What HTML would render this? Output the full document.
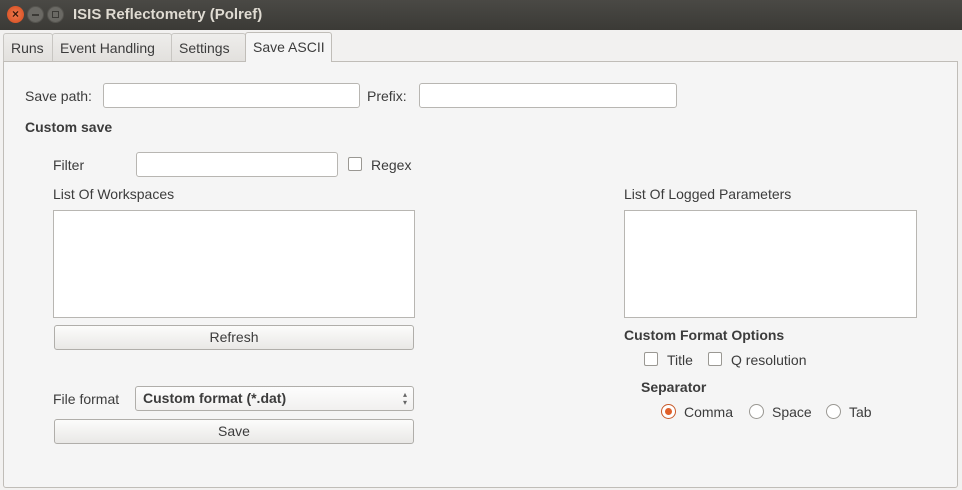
<!DOCTYPE html>
<html><head><meta charset="utf-8"><style>
*{box-sizing:border-box;margin:0;padding:0}
body{width:962px;height:490px;background:#f2f1f0;font-family:"Liberation Sans",sans-serif;font-size:14px;color:#3c3c3c;position:relative;overflow:hidden}
.a{position:absolute;white-space:nowrap}
.title{left:0;top:0;width:962px;height:30px;background:linear-gradient(#4a4945,#3b3a36);}
.title span{position:absolute;left:73px;top:6px;color:#dfdbd2;font-weight:bold;font-size:15px}
.wb{width:17px;height:17px;border-radius:50%;top:6px}
.tab{top:33px;height:29px;border:1px solid #c8c6c2;border-bottom:none;background:linear-gradient(#eeedeb,#e2e0dd);padding:6px 7px 0;font-size:14px;border-radius:3px 3px 0 0}
.panel{left:3px;top:61px;width:955px;height:427px;border:1px solid #c0bdb8;background:#f5f5f5;border-radius:0 0 3px 3px}
.inp{background:#fff;border:1px solid #b8b6b2;border-radius:3px;height:25px}
.btn{border:1px solid #b0aeaa;border-radius:3px;background:linear-gradient(#fcfcfb,#e9e8e6);height:25px;text-align:center;line-height:23px}
.cb{width:14px;height:14px;border:1px solid #9a9893;border-radius:2px;background:#fff}
.rb{width:15px;height:15px;border:1px solid #9a9893;border-radius:50%;background:#fff}
b{font-weight:bold}
</style></head><body>
<div class="a title"><span>ISIS Reflectometry (Polref)</span></div>
<div class="a wb" style="left:7px;background:radial-gradient(#f07a4e,#d3491c)"><div style="color:#3a1a0c;font-size:12px;text-align:center;line-height:17px;font-weight:bold">×</div></div>
<div class="a wb" style="left:27px;background:#6a6964;border:1px solid #55544f"><div style="margin:7px 4px;height:2px;background:#3b3a36"></div></div>
<div class="a wb" style="left:47px;background:#6a6964;border:1px solid #55544f"><div style="margin:4px;height:7px;border:1px solid #3b3a36"></div></div>
<div class="a tab" style="left:3px;width:50px">Runs</div>
<div class="a tab" style="left:52px;width:120px">Event Handling</div>
<div class="a tab" style="left:171px;width:75px">Settings</div>
<div class="a panel"></div>
<div class="a tab" style="left:245px;width:87px;top:32px;height:30px;background:#f5f5f5;border-color:#c0bdb8;padding-top:6px">Save ASCII</div>

<div class="a" style="left:25px;top:88px">Save path:</div>
<div class="a inp" style="left:103px;top:83px;width:257px"></div>
<div class="a" style="left:367px;top:88px">Prefix:</div>
<div class="a inp" style="left:419px;top:83px;width:258px"></div>
<div class="a" style="left:25px;top:119px"><b>Custom save</b></div>
<div class="a" style="left:53px;top:157px">Filter</div>
<div class="a inp" style="left:136px;top:152px;width:202px"></div>
<div class="a cb" style="left:348px;top:157px"></div>
<div class="a" style="left:371px;top:157px">Regex</div>
<div class="a" style="left:53px;top:186px">List Of Workspaces</div>
<div class="a" style="left:53px;top:210px;width:362px;height:108px;background:#fff;border:1px solid #b8b6b2"></div>
<div class="a btn" style="left:54px;top:325px;width:360px">Refresh</div>
<div class="a" style="left:53px;top:391px">File format</div>
<div class="a btn" style="left:135px;top:386px;width:279px;text-align:left;padding-left:7px;background:linear-gradient(#fdfdfd,#f1f0ef)"><b>Custom format (*.dat)</b><span style="position:absolute;right:6px;top:-1px;font-size:8px;line-height:8px;color:#666;padding-top:5px">▴<br>▾</span></div>
<div class="a btn" style="left:54px;top:419px;width:360px">Save</div>

<div class="a" style="left:624px;top:186px">List Of Logged Parameters</div>
<div class="a" style="left:624px;top:210px;width:293px;height:108px;background:#fff;border:1px solid #b8b6b2"></div>
<div class="a" style="left:624px;top:327px"><b>Custom Format Options</b></div>
<div class="a cb" style="left:644px;top:352px"></div>
<div class="a" style="left:667px;top:352px">Title</div>
<div class="a cb" style="left:708px;top:352px"></div>
<div class="a" style="left:731px;top:352px">Q resolution</div>
<div class="a" style="left:641px;top:379px"><b>Separator</b></div>
<div class="a rb" style="left:661px;top:404px;border-color:#c85a2a;background:#fff"><div style="width:7px;height:7px;border-radius:50%;background:#e0602a;margin:3px"></div></div>
<div class="a" style="left:684px;top:404px">Comma</div>
<div class="a rb" style="left:749px;top:404px"></div>
<div class="a" style="left:772px;top:404px">Space</div>
<div class="a rb" style="left:826px;top:404px"></div>
<div class="a" style="left:849px;top:404px">Tab</div>
</body></html>
